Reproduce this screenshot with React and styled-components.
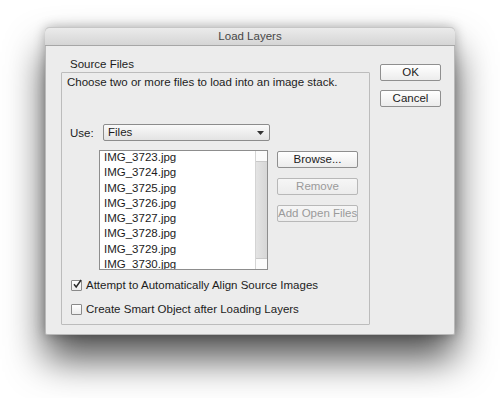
import React, { useState } from "react";
import styled, { createGlobalStyle } from "styled-components";

const GlobalStyle = createGlobalStyle`
  html, body {
    margin: 0;
    padding: 0;
    background: #ffffff;
  }
  body {
    font-family: "Liberation Sans", Arial, sans-serif;
    font-size: 11.5px;
    color: #1c1c1c;
  }
`;

const files = [
  "IMG_3723.jpg",
  "IMG_3724.jpg",
  "IMG_3725.jpg",
  "IMG_3726.jpg",
  "IMG_3727.jpg",
  "IMG_3728.jpg",
  "IMG_3729.jpg",
  "IMG_3730.jpg",
];

function Check() {
  return (
    <svg width="11" height="11" viewBox="0 0 11 11">
      <path
        d="M2.2 5.2 L4.6 8.2 L10 0.6"
        fill="none"
        stroke="#2a2a2a"
        strokeWidth="1.6"
      />
    </svg>
  );
}

export default function App() {
  const [align, setAlign] = useState(true);
  const [smart, setSmart] = useState(false);

  return (
    <Page>
      <GlobalStyle />
      <Dialog>
        <TitleBar>Load Layers</TitleBar>
        <Body>
          <GroupBox>
            <GroupTitle>Source Files</GroupTitle>
            <Description>
              Choose two or more files to load into an image stack.
            </Description>
            <UseRow>
              <UseLabel>Use:</UseLabel>
              <Select>
                <span>Files</span>
                <svg width="7" height="4" viewBox="0 0 7 4">
                  <path d="M0 0h7L3.5 4z" fill="#333" />
                </svg>
              </Select>
            </UseRow>
            <FileArea>
              <FileList>
                <Items>
                  {files.map((f) => (
                    <Item key={f}>{f}</Item>
                  ))}
                </Items>
                <ScrollTrack>
                  <ScrollCap />
                  <ScrollMiddle />
                  <ScrollCap $bottom />
                </ScrollTrack>
              </FileList>
              <SideButtons>
                <Button $wide>Browse...</Button>
                <Button $wide disabled>
                  Remove
                </Button>
                <Button $wide disabled>
                  Add Open Files
                </Button>
              </SideButtons>
            </FileArea>
            <Options>
              <Option onClick={() => setAlign(!align)}>
                <Box>{align && <Check />}</Box>
                Attempt to Automatically Align Source Images
              </Option>
              <Option onClick={() => setSmart(!smart)}>
                <Box>{smart && <Check />}</Box>
                Create Smart Object after Loading Layers
              </Option>
            </Options>
          </GroupBox>
          <MainButtons>
            <Button>OK</Button>
            <Button>Cancel</Button>
          </MainButtons>
        </Body>
      </Dialog>
    </Page>
  );
}

const Page = styled.div`
  width: 500px;
  height: 398px;
  box-sizing: border-box;
  padding: 27px 45px 0 45px;
  overflow: hidden;
`;

const Dialog = styled.div`
  width: 410px;
  height: 308px;
  background: #ececec;
  border: 1px solid #b9b9b9;
  border-top: none;
  box-sizing: border-box;
  border-radius: 5px 5px 2px 2px;
  box-shadow: 0 24px 38px rgba(0, 0, 0, 0.68), 0 0 12px rgba(0, 0, 0, 0.28);
  display: flex;
  flex-direction: column;
`;

const TitleBar = styled.div`
  height: 17px;
  line-height: 17px;
  text-align: center;
  font-size: 11.5px;
  color: #474747;
  background: linear-gradient(#ebebeb, #d5d5d5);
  border-bottom: 1px solid #a6a6a6;
  border-top: 1px solid #c6c6c6;
  border-radius: 5px 5px 0 0;
  margin: 0 -1px;
`;

const Body = styled.div`
  display: flex;
  align-items: flex-start;
  padding: 17px 0 0 15px;
  gap: 10px;
`;

const GroupBox = styled.div`
  position: relative;
  margin-top: 9px;
  width: 309px;
  height: 253px;
  box-sizing: border-box;
  border: 1px solid #bcbcbc;
  border-radius: 1px;
  padding: 2px 0 0 5px;
`;

const GroupTitle = styled.div`
  position: absolute;
  top: -16px;
  left: 4px;
  padding: 0 4px;
  background: #ececec;
  line-height: 15px;
  color: #1c1c1c;
`;

const Description = styled.div`
  line-height: 15px;
`;

const UseRow = styled.div`
  display: flex;
  align-items: center;
  margin-top: 34px;
`;

const UseLabel = styled.div`
  width: 33px;
  padding-left: 3px;
`;

const Select = styled.div`
  width: 167px;
  height: 17px;
  box-sizing: border-box;
  border: 1px solid #8c8c8c;
  border-radius: 2px;
  background: linear-gradient(#fafafa, #e3e3e3);
  display: flex;
  align-items: center;
  justify-content: space-between;
  padding: 0 5px 0 4px;
  line-height: 15px;
`;

const FileArea = styled.div`
  display: flex;
  align-items: flex-start;
  margin: 9px 0 0 32px;
  gap: 9px;
`;

const FileList = styled.div`
  width: 169px;
  height: 120px;
  box-sizing: border-box;
  border: 1px solid #8d8d8d;
  background: #ffffff;
  display: flex;
  overflow: hidden;
`;

const Items = styled.div`
  flex: 1;
  padding: 0 0 0 4px;
  margin-top: -1px;
`;

const Item = styled.div`
  line-height: 15.3px;
  white-space: nowrap;
`;

const ScrollTrack = styled.div`
  width: 11px;
  display: flex;
  flex-direction: column;
  border-left: 1px solid #d4d4d4;
  background: linear-gradient(90deg, #e4e4e4, #d6d6d6);
`;

const ScrollCap = styled.div`
  height: 10px;
  background: #fbfbfb;
  border-bottom: ${(p) => (p.$bottom ? "none" : "1px solid #c9c9c9")};
  border-top: ${(p) => (p.$bottom ? "1px solid #c9c9c9" : "none")};
`;

const ScrollMiddle = styled.div`
  flex: 1;
`;

const SideButtons = styled.div`
  display: flex;
  flex-direction: column;
  gap: 10px;
  margin-top: 1px;
`;

const Button = styled.button`
  width: ${(p) => (p.$wide ? "81px" : "61px")};
  height: 17px;
  padding: 0;
  box-sizing: border-box;
  font-family: "Liberation Sans", Arial, sans-serif;
  font-size: 11.5px;
  line-height: 15px;
  white-space: nowrap;
  color: #1c1c1c;
  border: 1px solid #8f8f8f;
  border-radius: 2px;
  background: linear-gradient(#ffffff, #ececec);
  &:disabled {
    color: #9a9a9a;
    border-color: #b8b8b8;
    background: linear-gradient(#f6f6f6, #ececec);
  }
`;

const MainButtons = styled.div`
  display: flex;
  flex-direction: column;
  gap: 9px;
  margin-top: 1px;
`;

const Options = styled.div`
  display: flex;
  flex-direction: column;
  gap: 9px;
  margin-top: 8px;
  padding-left: 4px;
`;

const Option = styled.label`
  display: flex;
  align-items: center;
  gap: 4px;
  line-height: 15px;
  cursor: default;
`;

const Box = styled.span`
  width: 11px;
  height: 11px;
  box-sizing: border-box;
  border: 1px solid #8a8a8a;
  border-radius: 1px;
  background: linear-gradient(#ffffff, #ececec);
  display: flex;
  align-items: center;
  justify-content: center;
  overflow: visible;
  svg {
    margin: -2px -1px 0 0;
  }
`;
